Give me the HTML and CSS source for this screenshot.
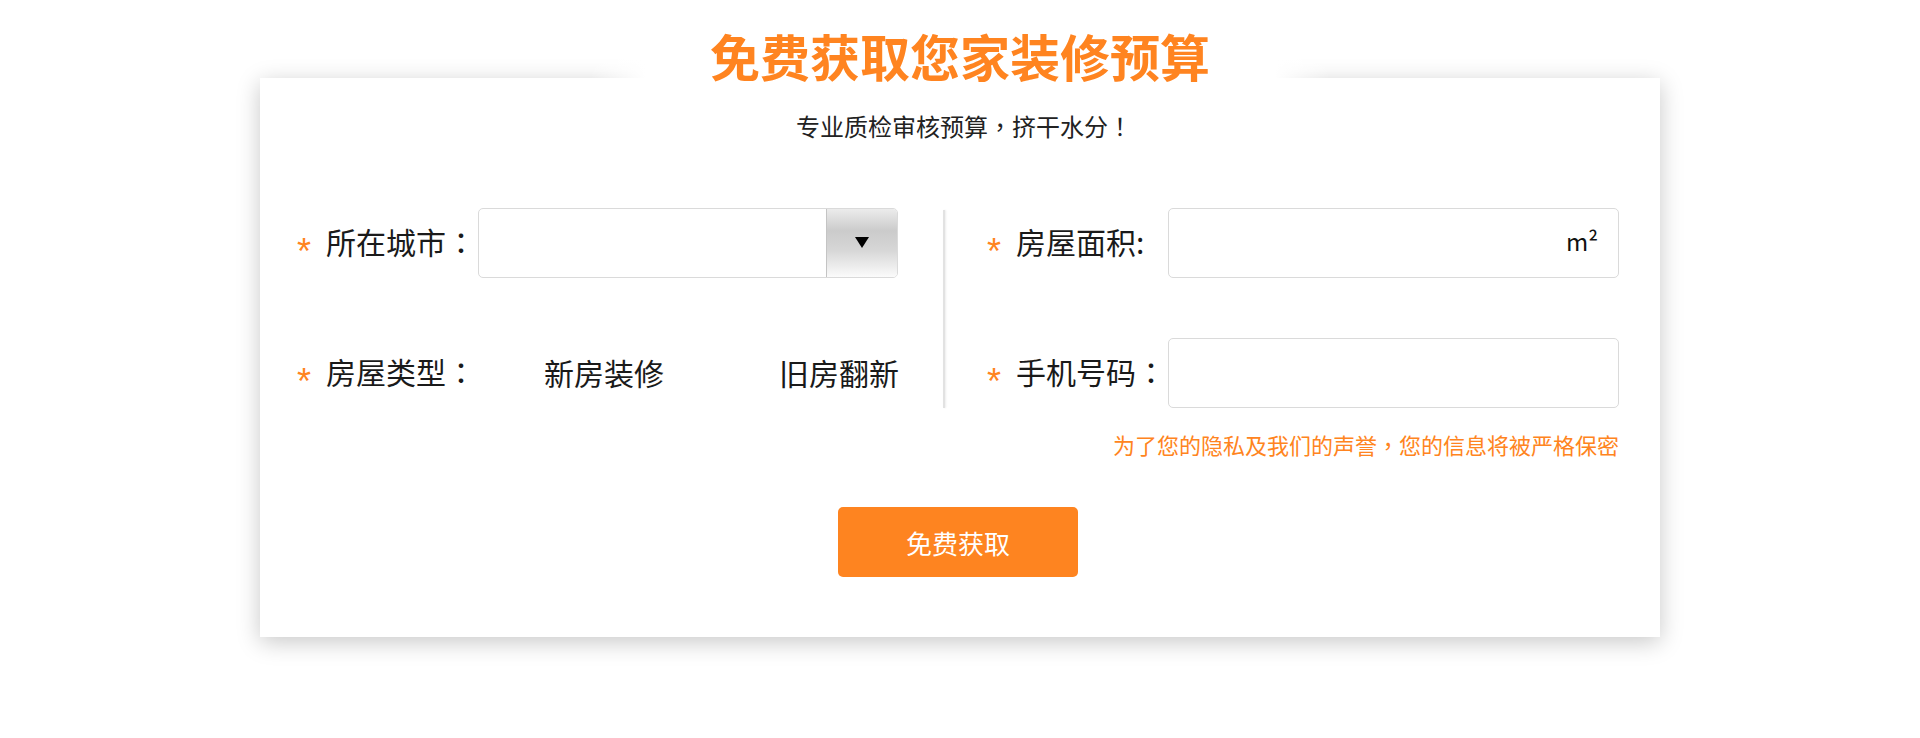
FILE: index.html
```html
<!DOCTYPE html>
<html lang="zh-CN">
<head>
<meta charset="utf-8">
<title>免费获取您家装修预算</title>
<link rel="stylesheet" href="styles.css">
</head>
<body>
<div class="page">
  <div class="head"><h1 class="title">免费获取您家装修预算</h1></div>
  <div class="card">
    <p class="sub">专业质检审核预算<span class="punc" lang="zh-TW">，</span>挤干水分<span class="punc" lang="zh-TW">！</span></p>
    <div class="form">
      <div class="col col-left">
        <div class="field">
          <span class="star">*</span><span class="label">所在城市<span class="punc" lang="zh-TW">：</span></span>
          <div class="select">
            <span class="select-value"></span>
            <span class="select-btn"><i class="tri"></i></span>
          </div>
        </div>
        <div class="field">
          <span class="star">*</span><span class="label">房屋类型<span class="punc" lang="zh-TW">：</span></span>
          <div class="options">
            <span class="opt">新房装修</span>
            <span class="opt">旧房翻新</span>
          </div>
        </div>
      </div>
      <div class="divider"></div>
      <div class="col col-right">
        <div class="field">
          <span class="star">*</span><span class="label">房屋面积:</span>
          <div class="box"><input class="inp" type="text"><span class="unit">m²</span></div>
        </div>
        <div class="field">
          <span class="star">*</span><span class="label">手机号码<span class="punc" lang="zh-TW">：</span></span>
          <div class="box"><input class="inp" type="text"></div>
        </div>
      </div>
    </div>
    <p class="note">为了您的隐私及我们的声誉<span class="punc" lang="zh-TW">，</span>您的信息将被严格保密</p>
    <div class="actions"><button class="submit" type="button">免费获取</button></div>
  </div>
</div>
</body>
</html>
```

FILE: styles.css
```css
html, body {
  margin: 0;
  padding: 0;
  background: #fff;
}
body {
  font-family: "Noto Sans CJK SC", "Noto Sans", sans-serif;
  color: #1a1a1a;
}
.page {
  width: 1920px;
  padding-bottom: 90px;
}
.punc {
  font-family: "Noto Sans CJK TC", "Noto Sans CJK SC", sans-serif;
}
.head {
  position: relative;
  z-index: 1;
  height: 78px;
  display: flex;
  justify-content: center;
}
.title {
  margin: 0;
  padding: 30px 120px 0;
  height: 48px;
  font-size: 50px;
  line-height: 50px;
  font-weight: 700;
  color: #ff8420;
  white-space: nowrap;
  background: linear-gradient(to right, rgba(255,255,255,0) 0, #fff 55px, #fff calc(100% - 55px), rgba(255,255,255,0) 100%);
}
.card {
  width: 1400px;
  box-sizing: border-box;
  margin: 0 auto;
  background: #fff;
  box-shadow: 0 5px 22px rgba(0, 0, 0, 0.22);
  padding: 36px 41px 60px 37px;
}
.sub {
  margin: 0;
  padding-left: 12px;
  text-align: center;
  font-size: 24px;
  line-height: 24px;
  color: #222;
}
.form {
  display: flex;
  margin-top: 70px;
}
.col {
  display: flex;
  flex-direction: column;
  gap: 60px;
}
.col-left {
  width: 602px;
}
.col-right {
  flex: 1;
}
.divider {
  width: 2px;
  margin: 2px 42px 0 44px;
  background: #e2e2e2;
  box-shadow: 1px 0 2px rgba(0, 0, 0, 0.08);
}
.field {
  display: flex;
  align-items: center;
  height: 70px;
}
.star {
  width: 29px;
  flex: none;
  font-family: "Liberation Sans", Arial, sans-serif;
  font-size: 36px;
  line-height: 36px;
  color: #ff8420;
  padding-top: 18px;
}
.label {
  width: 152px;
  flex: none;
  font-size: 30px;
  line-height: 30px;
  padding-bottom: 4px;
  white-space: nowrap;
}
.select {
  width: 420px;
  height: 70px;
  box-sizing: border-box;
  border: 1px solid #dadada;
  border-radius: 5px;
  display: flex;
  overflow: hidden;
}
.select-value {
  flex: 1;
}
.select-btn {
  width: 70px;
  flex: none;
  border-left: 1px solid #c4c4c4;
  background: linear-gradient(to bottom, #ececec 0%, #cbcbcb 32%, #d6d6d6 60%, #fbfbfb 100%);
  display: flex;
  align-items: center;
  justify-content: center;
}
.tri {
  width: 0;
  height: 0;
  border-left: 7px solid transparent;
  border-right: 7px solid transparent;
  border-top: 11px solid #000;
  margin-top: -1px;
}
.options {
  flex: 1;
  display: flex;
  justify-content: space-between;
  padding-left: 66px;
  font-size: 30px;
  line-height: 30px;
  padding-bottom: 2px;
}
.box {
  flex: 1;
  height: 70px;
  box-sizing: border-box;
  border: 1px solid #dadada;
  border-radius: 5px;
  display: flex;
  align-items: center;
  padding-right: 20px;
}
.inp {
  flex: 1;
  min-width: 0;
  height: 100%;
  border: 0;
  outline: 0;
  background: transparent;
  padding: 0 16px;
  font: inherit;
  font-size: 24px;
}
.unit {
  font-size: 24px;
  line-height: 24px;
  color: #111;
  padding-bottom: 4px;
}
.note {
  margin: 25px 0 0;
  text-align: right;
  font-size: 22px;
  line-height: 22px;
  color: #ff8420;
  white-space: nowrap;
}
.actions {
  display: flex;
  justify-content: center;
  margin-top: 52px;
}
.submit {
  width: 240px;
  height: 70px;
  border: 0;
  border-radius: 5px;
  background: #fe8420;
  color: #fff;
  font-family: "Noto Sans CJK SC", "Noto Sans", sans-serif;
  font-size: 26px;
  padding: 0;
  cursor: pointer;
}
```
